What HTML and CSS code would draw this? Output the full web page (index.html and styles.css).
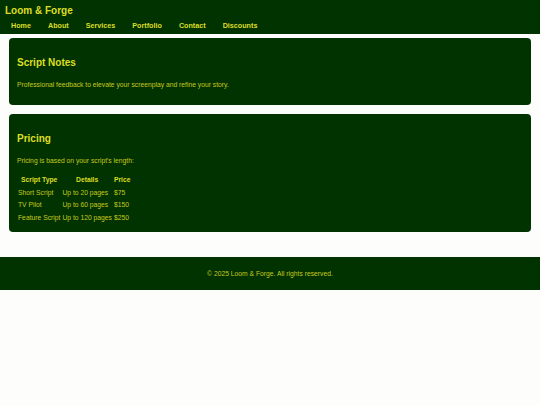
FILE: index.html
```html
<!DOCTYPE html>
<html lang="en">
<head>
<meta charset="utf-8">
<title>Loom &amp; Forge</title>
<link rel="stylesheet" href="styles.css">
</head>
<body>
<header class="site-header">
  <h1 class="brand">Loom &amp; Forge</h1>
  <nav class="nav">
    <a href="#">Home</a>
    <a href="#">About</a>
    <a href="#">Services</a>
    <a href="#">Portfolio</a>
    <a href="#">Contact</a>
    <a href="#">Discounts</a>
  </nav>
</header>
<main class="content">
  <section class="card">
    <h2>Script Notes</h2>
    <p>Professional feedback to elevate your screenplay and refine your story.</p>
  </section>
  <section class="card">
    <h2>Pricing</h2>
    <p>Pricing is based on your script's length:</p>
    <table class="prices">
      <thead>
        <tr><th>Script Type</th><th>Details</th><th>Price</th></tr>
      </thead>
      <tbody>
        <tr><td>Short Script</td><td>Up to 20 pages</td><td>$75</td></tr>
        <tr><td>TV Pilot</td><td>Up to 60 pages</td><td>$150</td></tr>
        <tr><td>Feature Script</td><td>Up to 120 pages</td><td>$250</td></tr>
      </tbody>
    </table>
  </section>
</main>
<footer class="site-footer">
  <p>&copy; 2025 Loom &amp; Forge. All rights reserved.</p>
</footer>
</body>
</html>
```
FILE: styles.css
```css
html, body {
  margin: 0;
  padding: 0;
  background: #fdfdfb;
}
body {
  font-family: "Liberation Sans", Arial, sans-serif;
  color: #c8c81e;
}
.site-header {
  background: #003300;
  padding: 4px 5px 0;
  height: 30px;
}
.brand {
  margin: 0;
  font-size: 10px;
  line-height: 13px;
  font-weight: bold;
  color: #dede22;
}
.nav {
  display: flex;
  gap: 5px;
  margin-top: 4px;
}
.nav a {
  color: #dede22;
  font-size: 7.2px;
  font-weight: bold;
  text-decoration: none;
  padding: 0 6px;
  line-height: 10px;
}
.content {
  padding: 4px 9px 25px;
  display: flex;
  flex-direction: column;
  gap: 9px;
}
.card {
  background: #003300;
  border-radius: 4px;
  padding: 18px 8px 8px;
}
.card h2 {
  margin: 0 0 11px;
  font-size: 10px;
  line-height: 13px;
  color: #dede22;
}
.card p {
  margin: 0 0 8px;
  font-size: 6.75px;
  line-height: 9px;
}
.prices {
  border-collapse: collapse;
  font-size: 6.75px;
  margin-top: 9px;
}
.prices th, .prices td {
  padding: 2px 1px;
  line-height: 8.5px;
  text-align: left;
}
.prices th {
  text-align: center;
  font-weight: bold;
  color: #dede22;
}
.site-footer {
  background: #003300;
  height: 33px;
  display: flex;
  align-items: center;
  justify-content: center;
}
.site-footer p {
  margin: 0;
  font-size: 6.75px;
}
```
